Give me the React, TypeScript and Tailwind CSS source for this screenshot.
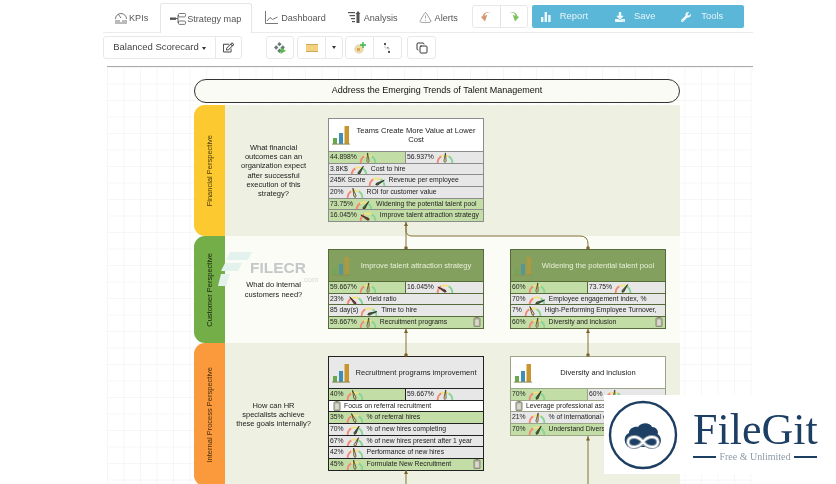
import React from "react";
import { Copy, TriangleAlert } from "lucide-react";
import { FaDownload, FaWrench, FaRegEdit } from "react-icons/fa";

type Cell = { v?: string; a?: number; l?: string; green?: boolean; white?: boolean; batt?: "l" | "r"; w?: string };
type Row = Cell[];

function Gauge({ a }: { a: number }) {
  const fill = a < -25 ? "#8c2f22" : a > 25 ? "#3f6b2c" : "#f5e88c";
  return (
    <svg width="18" height="11" viewBox="0 0 19 12" className="shrink-0">
      <path d="M1.500 12 A8 8 0 0 1 5.500 4.800" fill="none" stroke="#f08a76" strokeWidth="2" />
      <path d="M5.500 4.800 A8 8 0 0 1 13.500 4.800" fill="none" stroke="#f4e27a" strokeWidth="2" />
      <path d="M13.500 4.800 A8 8 0 0 1 17.500 12" fill="none" stroke="#86d596" strokeWidth="2" />
      <g transform={`rotate(${a} 9.500 10)`}>
        <polygon points="9.500,1 10.700,10 9.500,11.500 8.300,10" fill={fill} stroke="#222" strokeWidth="0.700" />
      </g>
    </svg>
  );
}

function Battery() {
  return (
    <svg width="8" height="10" viewBox="0 0 8 11" className="shrink-0">
      <rect x="2.500" y="0" width="3" height="1.400" fill="#8a8a72" />
      <rect x="0.600" y="1" width="6.800" height="9.600" rx="1" fill="#b5b5a2" stroke="#77786a" strokeWidth="0.800" />
      <rect x="2" y="3" width="4" height="6" fill="#d8d8cc" />
    </svg>
  );
}

function Bars({ faded }: { faded?: boolean }) {
  return (
    <svg width="18" height="20" viewBox="0 0 18 20" className={faded ? "shrink-0 opacity-60" : "shrink-0"}>
      <rect x="1" y="13" width="4" height="6" fill="#6aa84f" />
      <rect x="7" y="8" width="4" height="11" fill="#3d8fb5" />
      <rect x="12.500" y="1" width="4.500" height="18" fill="#c8952f" />
      <rect x="0" y="18.600" width="18" height="1" fill="#8a8a50" />
    </svg>
  );
}

function CellView({ c, line }: { c: Cell; line: string }) {
  const bg = c.green ? "bg-[#c3dda6]" : c.white ? "bg-white" : "bg-[#e7e7e7]";
  return (
    <div className={`${c.w ?? "flex-1"} ${bg} ${line} flex h-full min-w-0 items-center overflow-hidden whitespace-nowrap border-r border-solid pl-[1px] text-[6.8px] leading-none text-[#222] last:border-r-0`}>
      {c.batt === "l" && <span className="mr-[2px] ml-[3px] flex"><Battery /></span>}
      {c.v && <span>{c.v}</span>}
      {c.a !== undefined && <span className="mx-[2px] flex"><Gauge a={c.a} /></span>}
      {c.l && <span className="ml-[1px]">{c.l}</span>}
      {c.batt === "r" && <span className="mr-[2px] ml-auto flex"><Battery /></span>}
    </div>
  );
}

function Node({
  title, rows, head, border, line, titleColor, faded, headH = "h-[31px]",
}: { title: string; rows: Row[]; head: string; border: string; line: string; titleColor: string; faded?: boolean; headH?: string }) {
  return (
    <div className={`w-[156px] border border-solid ${border}`}>
      <div className={`flex ${headH} items-center pl-[3px] pr-[1px] ${head}`}>
        <Bars faded={faded} />
        <div className={`flex-1 px-[2px] text-center text-[7.6px] leading-[9px] ${titleColor}`}>{title}</div>
      </div>
      {rows.map((r, i) => (
        <div key={i} className={`flex h-[11.7px] border-t border-solid ${line}`}>
          {r.map((c, j) => <CellView key={j} c={c} line={line} />)}
        </div>
      ))}
    </div>
  );
}

function Lane({
  label, color, bg, q, h, labelColor, children,
}: { label: string; color: string; bg: string; q: string[]; h: string; labelColor: string; children: React.ReactNode }) {
  return (
    <div className={`flex ${h} ${bg} rounded-l-[11px]`}>
      <div className={`flex w-[31px] shrink-0 items-center justify-center rounded-l-[11px] ${color}`}>
        <span className={`rotate-180 text-[7.5px] leading-none whitespace-nowrap [writing-mode:vertical-rl] ${labelColor}`}>{label}</span>
      </div>
      <div className="flex w-[97px] shrink-0 flex-col items-center justify-center text-center text-[7.5px] leading-[9.2px] whitespace-nowrap text-[#222]">
        {q.map((t) => <span key={t}>{t}</span>)}
      </div>
      <div className="ml-[6px] flex items-start gap-[26px] pt-[13px]">{children}</div>
    </div>
  );
}

const Tab = ({ icon, text, active, gap = "gap-[3px]" }: { icon: React.ReactNode; text: string; active?: boolean; gap?: string }) => (
  <div className={`flex items-center ${gap} text-[9.1px] text-[#555] ${active ? "h-[30px] rounded-t-[3px] border border-b-0 border-solid border-[#e6e6e6] bg-white" : ""}`}>
    {icon}
    <span className="pt-[3px] whitespace-nowrap">{text}</span>
  </div>
);

const Btn = ({ className = "", children }: { className?: string; children: React.ReactNode }) => (
  <div className={`flex h-full items-center justify-center ${className}`}>{children}</div>
);

export default function App() {
  const T1: Row[] = [
    [{ v: "44.898%", a: -3, green: true, w: "w-[77px]" }, { v: "56.937%", a: 3 }],
    [{ v: "3.8K$", a: 32, l: "Cost to hire" }],
    [{ v: "245K Score", a: 62, l: "Revenue per employee" }],
    [{ v: "20%", a: -15, l: "ROI for customer value" }],
    [{ v: "73.75%", a: 35, l: "Widening the potential talent pool", green: true }],
    [{ v: "16.045%", a: -60, l: "Improve talent attraction strategy", green: true }],
  ];
  const T2: Row[] = [
    [{ v: "59.667%", a: 5, green: true, w: "w-[77px]" }, { v: "16.045%", a: -60 }],
    [{ v: "23%", a: -40, l: "Yield ratio" }],
    [{ v: "85 day(s)", a: 72, l: "Time to hire" }],
    [{ v: "59.667%", a: 5, l: "Recruitment programs", green: true, batt: "r" }],
  ];
  const T3: Row[] = [
    [{ v: "60%", a: 5, green: true, w: "w-[77px]" }, { v: "73.75%", a: 35 }],
    [{ v: "70%", a: 68, l: "Employee engagement index, %" }],
    [{ v: "7%", a: -22, l: "High-Performing Employee Turnover," }],
    [{ v: "60%", a: 5, l: "Diversity and inclusion", green: true, batt: "r" }],
  ];
  const T4: Row[] = [
    [{ v: "40%", a: -18, green: true, w: "w-[77px]" }, { v: "59.667%", a: 5 }],
    [{ batt: "l", l: "Focus on referral recruitment", white: true }],
    [{ v: "35%", a: -25, l: "% of referral hires", green: true }],
    [{ v: "70%", a: 30, l: "% of new hires completing" }],
    [{ v: "67%", a: 25, l: "% of new hires present after 1 year" }],
    [{ v: "42%", a: -10, l: "Performance of new hires" }],
    [{ v: "45%", a: -10, l: "Formulate New Recruitment", green: true, batt: "r" }],
  ];
  const T5: Row[] = [
    [{ v: "70%", a: 30, green: true, w: "w-[77px]" }, { v: "60%", a: 5 }],
    [{ batt: "l", l: "Leverage professional assessment", white: true }],
    [{ v: "21%", a: 8, l: "% of international employees" }],
    [{ v: "70%", a: 30, l: "Understand Diversity and inclusion", green: true }],
  ];

  return (
    <div className="relative h-[484px] w-[836px] overflow-hidden bg-white font-['Liberation_Sans',Arial,sans-serif] blur-[0.3px]">
      {/* top bar */}
      <div className="ml-[103px] flex h-[33px] w-[650px] items-start border-b border-solid border-[#ebebeb] pt-[3px]">
        <div className="ml-[11px] mt-[6px]">
          <Tab gap="gap-[1px]" text="KPIs" icon={
            <svg width="14" height="13" viewBox="0 0 14 13" fill="none" stroke="#666" strokeWidth="0.9">
              <path d="M1.500 8 A5.500 5.500 0 1 1 12.500 8" /><path d="M7 7 L4.500 3.500" /><path d="M1 10h5M8 10h5M1 12h12" />
            </svg>} />
        </div>
        <div className="ml-[12px] w-[92px]">
          <Tab active gap="gap-[1px]" text="Strategy map" icon={
            <svg width="16" height="12" viewBox="0 0 16 12" fill="none" className="ml-[9px]">
              <rect x="0" y="4.500" width="6" height="2.400" fill="#555" />
              <path d="M6 5.500h2M8 2v8" stroke="#555" strokeWidth="0.900" />
              <rect x="8.500" y="0.500" width="7" height="3.400" rx="1" stroke="#555" strokeWidth="0.800" />
              <rect x="8.500" y="8" width="7" height="3.400" rx="1" stroke="#555" strokeWidth="0.800" />
            </svg>} />
        </div>
        <div className="ml-[13px] mt-[6px]">
          <Tab text="Dashboard" icon={
            <svg width="13" height="13" viewBox="0 0 13 13" fill="none" stroke="#666" strokeWidth="0.900">
              <path d="M0.500 0v12.500H13" /><path d="M2 10 L5 6.500 L7.500 8.500 L12.500 6" />
            </svg>} />
        </div>
        <div className="ml-[22px] mt-[6px]">
          <Tab text="Analysis" icon={
            <svg width="13" height="12" viewBox="0 0 13 12" fill="#555">
              <rect x="0" y="1" width="7" height="1.200" /><rect x="1.500" y="4" width="5.500" height="1.200" /><rect x="3" y="7" width="4" height="1.200" /><rect x="4" y="10" width="3" height="1.200" />
              <path d="M8.500 12V3H7.500l2.500-3L12.500 3h-1v9z" />
            </svg>} />
        </div>
        <div className="ml-[21px] mt-[6px]">
          <Tab text="Alerts" icon={<TriangleAlert size={13} strokeWidth={1} color="#555" />} />
        </div>
        <div className="ml-[14px] mt-[2px] flex h-[23px] w-[56px] shrink-0 rounded-[3px] border border-solid border-[#e8e8e8]">
          <Btn className="w-[28px] border-r border-solid border-[#e4e4e4]">
            <svg width="11" height="10" viewBox="0 0 10 9"><path d="M10 1.500C7 0 4 1 3.500 3H6L2.500 8 0 3h1.500C2.500 .5 7-1 10 1.500z" transform="rotate(-15 5 4)" fill="#d39a72" /></svg>
          </Btn>
          <Btn className="flex-1">
            <svg width="11" height="10" viewBox="0 0 10 9"><path d="M0 1.500C3 0 6 1 6.500 3H4l3.500 5L10 3H8.500C7.500 .5 3-1 0 1.500z" transform="rotate(15 5 4)" fill="#7fc35f" /></svg>
          </Btn>
        </div>
        <div className="ml-[4px] mt-[2px] flex h-[23px] w-[212px] shrink-0 items-center rounded-[2px] bg-[#5bb7d7] text-[9.4px] text-white/85">
          <svg width="10" height="10" viewBox="0 0 10 10" fill="#fff" className="ml-[9px] opacity-90">
            <rect x="0" y="5" width="2.400" height="5" /><rect x="3.600" y="0" width="2.400" height="10" /><rect x="7.200" y="3" width="2.400" height="7" />
          </svg>
          <span className="ml-[9px]">Report</span>
          <FaDownload size={10} className="ml-[27px] text-white/90" />
          <span className="ml-[9px]">Save</span>
          <FaWrench size={10} className="ml-[26px] text-white/90" />
          <span className="ml-[10px]">Tools</span>
        </div>
      </div>

      {/* second toolbar */}
      <div className="ml-[103px] mt-[3px] flex h-[23px] w-[333px] items-center text-[#444]">
        <div className="flex h-full w-[139px] rounded-[3px] border border-solid border-[#e8e8e8]">
          <Btn className="w-[112px] gap-[3px] border-r border-solid border-[#e8e8e8] text-[9.5px]">
            Balanced Scorecard
            <span className="mt-[1px] h-0 w-0 border-x-[2.500px] border-t-[3px] border-solid border-x-transparent border-t-[#333]" />
          </Btn>
          <Btn className="flex-1"><FaRegEdit size={11} color="#444" /></Btn>
        </div>
        <div className="ml-[24px] flex h-full w-[28px] items-center justify-center rounded-[3px] border border-solid border-[#e8e8e8]">
          <svg width="12" height="12" viewBox="0 0 11 11">
            <path d="M5 0l2 2-2 2-2-2zM2 3l2 2-2 2-2-2zM8 3l2 2-2 2-2-2zM5 6l2 2-2 2-2-2z" fill="#667a78" />
            <path d="M6 5l5 3-5 3z" fill="#5fb84f" />
          </svg>
        </div>
        <div className="ml-[3px] flex h-full w-[46px] rounded-[3px] border border-solid border-[#e8e8e8]">
          <Btn className="w-[28px] border-r border-solid border-[#e8e8e8]">
            <span className="h-[8px] w-[12px] border-y border-solid border-[#c9a860] bg-[#f3d27f]" />
          </Btn>
          <Btn className="flex-1"><span className="h-0 w-0 border-x-[2.500px] border-t-[3px] border-solid border-x-transparent border-t-[#333]" /></Btn>
        </div>
        <div className="ml-[2px] flex h-full w-[57px] rounded-[3px] border border-solid border-[#e8e8e8]">
          <Btn className="w-[28px] border-r border-solid border-[#e8e8e8]">
            <svg width="12" height="12" viewBox="0 0 12 12">
              <circle cx="5" cy="7" r="4.300" fill="#f1dca0" stroke="#ccc" strokeWidth="0.600" />
              <rect x="3" y="6" width="3" height="3" fill="#d9a860" />
              <path d="M9 0v6M6 3h6" stroke="#3fb54a" strokeWidth="1.400" />
            </svg>
          </Btn>
          <Btn className="flex-1">
            <svg width="7" height="10" viewBox="0 0 7 10" fill="none">
              <path d="M1 1v4h4v4" stroke="#bbb" strokeWidth="0.700" />
              <rect x="0" y="0" width="2" height="2" fill="#555" /><rect x="4" y="8" width="2" height="2" fill="#555" /><rect x="3" y="4" width="1.500" height="1.500" fill="#888" />
            </svg>
          </Btn>
        </div>
        <div className="ml-[5px] flex h-full w-[29px] shrink-0 items-center justify-center rounded-[3px] border border-solid border-[#e8e8e8]">
          <Copy size={12} strokeWidth={1.8} color="#222" />
        </div>
      </div>

      {/* canvas */}
      <div className="relative ml-[107px] mt-[7px] h-[418px] w-[646px] border-t border-solid border-t-[#a8a8a8] bg-[linear-gradient(#f6f6f6_1px,transparent_1px),linear-gradient(90deg,#f6f6f6_1px,transparent_1px)] bg-[size:16.5px_16.5px] pl-[87px] pt-[12px]">
        <div className="relative flex h-[24px] w-[486px] items-center justify-center rounded-full border border-solid border-[#333] bg-[#fbfbf5] text-[9px] text-[#111]">
          Address the Emerging Trends of Talent Management
        </div>
        <div className="relative mt-[2px] flex w-[486px] flex-col">
          <Lane h="h-[131px]" color="bg-[#fdc930]" bg="bg-[#eef0e1]" labelColor="text-[#4a3a08]" label="Financial Perspective" q={["What financial", "outcomes can an", "organization expect", "after successful", "execution of this", "strategy?"]}>
            <Node headH="h-[32px]" title="Teams Create More Value at Lower Cost" rows={T1} head="bg-white" border="border-[#8c8c8c]" line="border-[#8c8c8c]" titleColor="text-[#222]" />
          </Lane>
          <Lane h="h-[107px]" color="bg-[#73ae49]" bg="bg-[#fbfcf5]" labelColor="text-[#14260a]" label="Customer Perspective" q={["What do internal", "customers need?"]}>
            <Node faded title="Improve talent attraction strategy" rows={T2} head="bg-[#84a05f]" border="border-[#566a3a]" line="border-[#566a3a]" titleColor="text-[#e8f0da]" />
            <Node faded title="Widening the potential talent pool" rows={T3} head="bg-[#84a05f]" border="border-[#566a3a]" line="border-[#566a3a]" titleColor="text-[#e8f0da]" />
          </Lane>
          <Lane h="h-[143px]" color="bg-[#fb9a3d]" bg="bg-[#eef0e1]" labelColor="text-[#4a2a0a]" label="Internal Process Perspective" q={["How can HR", "specialists achieve", "these goals internally?"]}>
            <Node title="Recruitment programs improvement" rows={T4} head="bg-[#e8e8e8]" border="border-[#222]" line="border-[#222]" titleColor="text-[#222]" />
            <Node title="Diversity and inclusion" rows={T5} head="bg-white" border="border-[#9aa58a]" line="border-[#9aa58a]" titleColor="text-[#222]" />
          </Lane>
        </div>
      </div>

      {/* watermark over the customer lane */}
      <div className="pointer-events-none absolute left-[218px] top-[250px] flex h-[40px] w-[105px]">
        <svg width="34" height="38" viewBox="0 0 34 38" fill="#e4f2ee" className="shrink-0">
          <polygon points="12,2 34,2 30,10 8,10" /><polygon points="7,13 24,13 20,21 3,21" /><polygon points="3,24 12,24 8,36 0,36" />
        </svg>
        <div className="-ml-[2px] mt-[9px] text-[15.5px] leading-[17px] font-bold text-[#c4c8c8]">FILECR</div>
        <div className="absolute left-[84px] top-[26px] text-[7.500px] leading-none text-[#d6d9d9]">.com</div>
      </div>

      {/* connectors */}
      <svg width="836" height="484" className="pointer-events-none absolute left-0 top-0" fill="none" stroke="#84723a" strokeWidth="1">
        <path d="M406 222V249M406 329V356M406 470V484M588 329V356M588 436V484" />
        <path d="M406 226V230Q406 236 412 236H580Q588 236 588 244V249" />
        <g fill="#7a6428" stroke="none">
          <circle cx="406" cy="248" r="1.800" /><circle cx="588" cy="248" r="1.800" /><circle cx="406" cy="355" r="1.800" /><circle cx="588" cy="355" r="1.800" />
          <path d="M406 222l-2 4h4zM406 329l-2 4h4zM588 436.500l-2 4h4zM406 470l-2 4h4zM588 329l-2 4h4z" />
        </g>
      </svg>

      {/* FileGit badge */}
      <div className="absolute left-[604px] top-[395px] flex h-[79px] w-[232px] items-center bg-white">
        <svg width="70" height="70" viewBox="0 0 70 70" className="ml-[4px] shrink-0">
          <circle cx="35" cy="35" r="33" fill="none" stroke="#1d3f63" strokeWidth="2.400" />
          <path d="M20 47C15 42 16 35 21 33 21 28 27 26 30 27 33 22 42 22 44 27 49 27 51 32 49.500 34 54 37 54 43 50 47z" fill="#1d3f63" />
          <path d="M35 42C32 38 29 37 26 37 22 37 20 39.500 20 42S22 47 26 47C29 47 32 46 35 42 38 38 41 37 44 37 48 37 50 39.500 50 42S48 47 44 47C41 47 38 46 35 42Z" fill="none" stroke="#8a9aa8" strokeWidth="4" />
          <path d="M35 42C32 38 29 37 26 37 22 37 20 39.500 20 42S22 47 26 47C29 47 32 46 35 42 38 38 41 37 44 37 48 37 50 39.500 50 42S48 47 44 47C41 47 38 46 35 42Z" fill="none" stroke="#fff" strokeWidth="2" />
        </svg>
        <div className="ml-[15px] flex w-[124px] flex-col pt-[2px] font-['Liberation_Serif',serif] text-[#1d3f63]">
          <div className="whitespace-nowrap text-[44px] leading-[42px]">FileGit</div>
          <div className="mt-[1px] flex items-center gap-[3px] whitespace-nowrap text-[10px] leading-none text-[#8d9aa8]">
            <span className="h-[2px] flex-1 bg-[#1d3f63]" />
            <span>Free &amp; Unlimited</span>
            <span className="h-[2px] flex-1 bg-[#1d3f63]" />
          </div>
        </div>
      </div>
    </div>
  );
}
